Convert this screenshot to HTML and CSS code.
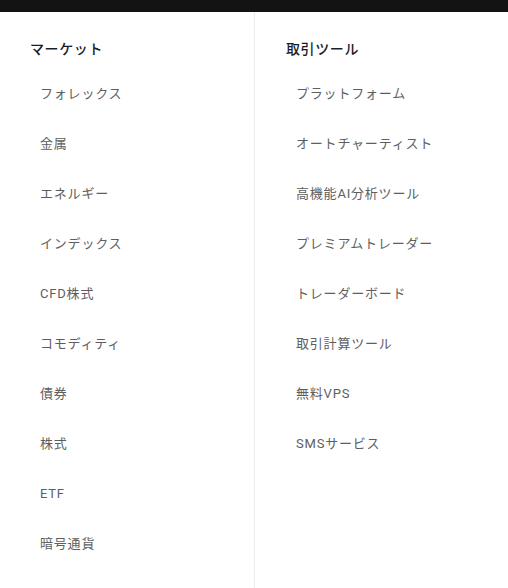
FILE: index.html
```html
<!DOCTYPE html>
<html lang="ja">
<head>
<meta charset="utf-8">
<link rel="stylesheet" href="styles.css">
</head>
<body>
<div class="topbar"></div>
<div class="menu">
  <div class="col col-left">
    <div class="heading">マーケット</div>
    <ul class="list">
      <li>フォレックス</li>
      <li>金属</li>
      <li>エネルギー</li>
      <li>インデックス</li>
      <li>CFD株式</li>
      <li>コモディティ</li>
      <li>債券</li>
      <li>株式</li>
      <li>ETF</li>
      <li>暗号通貨</li>
    </ul>
  </div>
  <div class="col col-right">
    <div class="heading">取引ツール</div>
    <ul class="list">
      <li>プラットフォーム</li>
      <li>オートチャーティスト</li>
      <li>高機能AI分析ツール</li>
      <li>プレミアムトレーダー</li>
      <li>トレーダーボード</li>
      <li>取引計算ツール</li>
      <li>無料VPS</li>
      <li>SMSサービス</li>
    </ul>
  </div>
</div>
</body>
</html>
```

FILE: styles.css
```css
html, body {
  margin: 0;
  padding: 0;
  background: #ffffff;
  font-family: Roboto, "Noto Sans CJK JP", sans-serif;
}
.topbar {
  height: 12px;
  background: #131313;
}
.menu {
  display: flex;
  height: 576px;
}
.col {
  box-sizing: border-box;
  padding-top: 27px;
}
.col-left {
  width: 255px;
  padding-left: 30px;
  border-right: 1px solid #ebebf2;
}
.col-right {
  flex: 1;
  padding-left: 31px;
}
.heading {
  font-size: 14px;
  line-height: 20px;
  font-weight: 500;
  letter-spacing: 0.6px;
  color: #1b1d2b;
  margin-bottom: 10px;
}
.list {
  list-style: none;
  margin: 0;
  padding: 0;
}
.list li {
  font-size: 13px;
  line-height: 20px;
  letter-spacing: 0.8px;
  padding: 15px 0 15px 10px;
  color: #5e5e5e;
}
```
